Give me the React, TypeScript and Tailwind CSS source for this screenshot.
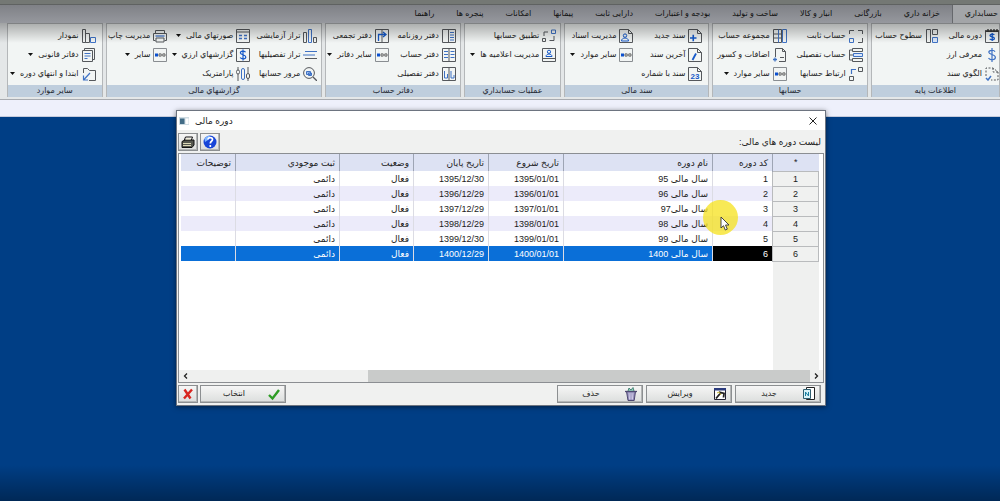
import React from "react";

type IconName =
  | "calendar" | "dollar" | "template" | "levels" | "fixed" | "detail" | "link" | "set" | "addsub"
  | "more" | "newdoc" | "lastdoc" | "numdoc" | "userdoc" | "match" | "notice" | "journal" | "ledger"
  | "subledger" | "summary" | "bars" | "lines" | "review" | "statement" | "dollarbox" | "param"
  | "printer" | "chart" | "book" | "folder";

const G = "#55585c";
const B = "#3f72c4";

const page = (
  <path d="M.5 .5h9l4 4v9H.5zM9.500 .5v4h4" stroke={G} fill="none" />
);

const icons: Record<IconName, React.ReactNode> = {
  calendar: (
    <>
      <path d="M.5 2.5h13v11H.5z" stroke={G} fill="none" />
      <path d="M0 2h14M3 0v3M6 0v3M9 0v3M12 0v3" stroke="#333" strokeWidth="1.3" />
      <path d="M9.3 5.8C8.500 4.800 5 4.900 5 6.600s4.400 1 4.400 2.800-3.600 1.800-4.700.5M7.200 4v8" stroke="#1559c9" fill="none" strokeWidth="1.300" />
    </>
  ),
  dollar: (
    <path d="M10 3.800C9 1.600 3.800 1.800 3.800 4.300S10.400 6.300 10.400 9.300 5 12.600 3.500 10M7 0v14" stroke={B} fill="none" strokeWidth="1.200" />
  ),
  template: (
    <>
      <path d="M1 9V1h7l5 4v8H6M8 1v4h5" stroke={G} fill="none" strokeDasharray="2 1.500" />
      <path d="M1 11l2 2 3-4" stroke={B} fill="none" strokeWidth="1.500" />
    </>
  ),
  levels: (
    <>
      <path d="M1.500 .5h4v13h-4zM7.500 .5h5v5h-5z" stroke={G} fill="none" />
      <path d="M7.500 8.500h5v5h-5z" stroke={B} fill="#dbe8fb" />
    </>
  ),
  fixed: (
    <>
      <path d="M.5 5V1.500H5M9 1.500h4.500V5M13.500 9v4.500H9" stroke={G} fill="none" />
      <path d="M.5 9.500h4v4h-4z" stroke={B} fill="none" />
    </>
  ),
  detail: (
    <>
      <path d="M3.500 .5h10v3h-10zM3.500 10.500h10v3h-10zM3 2H.5v10H3M.5 7h4" stroke={G} fill="none" />
      <path d="M4.500 5.500h9v3h-9z" stroke={B} fill="#dbe8fb" />
    </>
  ),
  link: (
    <>
      <path d="M9.500 .5h4v4h-4zM.5 9.500h4v4h-4z" stroke={G} fill="none" />
      <path d="M2.500 7V2.500H7" stroke={B} fill="none" strokeWidth="1.200" />
    </>
  ),
  set: (
    <>
      <path d="M.5 .5h8v13h-8zM.5 5h8M.5 9h8" stroke={G} fill="none" />
      <path d="M9.500 .5h4v13h-4z" stroke={B} fill="none" />
      <path d="M5.500 .5v13" stroke={B} />
    </>
  ),
  addsub: (
    <>
      <path d="M2.500 9V.5h7l3 3v10H6M9.500 .5v3h3M7 9.500h4" stroke={G} fill="none" />
      <path d="M0 11.500h4M2 9.500v4" stroke={B} strokeWidth="1.300" />
    </>
  ),
  more: (
    <>
      <path d="M.5 .5h13v13H.5z" stroke="#898d91" fill="none" />
      <path d="M2 5.500h3v3H2z" fill="#0b50cf" />
      <path d="M6 5.900h2.200v2.200H6zM9.800 5.900H12v2.200H9.800z" stroke="#444" fill="none" strokeWidth=".8" />
    </>
  ),
  newdoc: <>{page}<path d="M2 9h6.500M5.250 5.750v6.500" stroke="#1559c9" strokeWidth="1.600" /></>,
  lastdoc: <>{page}<path d="M4.500 12l3.500-6.500" stroke="#1559c9" strokeWidth="1.800" /></>,
  numdoc: (
    <>
      {page}
      <text x="7" y="12" textAnchor="middle" fontSize="8" fontWeight="700" fill="#1559c9" direction="ltr">23</text>
    </>
  ),
  userdoc: (
    <>
      {page}
      <circle cx="6" cy="6.600" r="1.700" stroke="#1559c9" fill="none" />
      <path d="M2.500 12c0-4 7-4 7 0z" stroke="#1559c9" fill="none" />
    </>
  ),
  match: (
    <>
      <path d="M.5 9.500h3v3h-3zM2 7V3h4M7.500 11.500H12V7" stroke={G} fill="none" />
      <path d="M9.500 1h4v3.500h-4z" stroke={B} fill="none" />
    </>
  ),
  notice: (
    <>
      <path d="M.5 .5h13v13H.5zM.5 10.500h13" stroke={G} fill="none" />
      <circle cx="7" cy="3.800" r="1.600" stroke="#1559c9" fill="none" />
      <path d="M4 8.500c0-3.300 6-3.300 6 0z" stroke="#1559c9" fill="none" />
    </>
  ),
  journal: (
    <>
      <path d="M.5 .5h13v13H.5zM6.500 .5v13" stroke={G} fill="none" />
      <path d="M8 3.500h4M8 6h4M8 8.500h4M8 11h4" stroke={B} />
    </>
  ),
  ledger: (
    <>
      <path d="M.5 .5h13v13H.5zM7 .5v13" stroke={G} fill="none" />
      <path d="M2 3.500h4M2 6.500h4M2 9.500h4M8.500 3.500h4M8.500 6.500h4M8.500 9.500h4" stroke={B} />
    </>
  ),
  subledger: (
    <>
      <path d="M.5 .5h13v13H.5zM7 .5v13" stroke={G} fill="none" />
      <path d="M2.500 4v7h3V7M9 4v7h3V8" stroke={B} fill="none" />
    </>
  ),
  summary: (
    <>
      <path d="M.5 .5h13v13H.5zM7 .5v13" stroke={G} fill="none" />
      <path d="M3.500 12V5.500h7M8 3l3 2.500L8 8" stroke="#1559c9" fill="none" strokeWidth="1.300" />
    </>
  ),
  bars: (
    <>
      <path d="M.5 3.500h3v10h-3zM10.500 8.500h3v5h-3z" stroke={G} fill="none" />
      <path d="M5.500 .5h3v13h-3z" stroke={B} fill="none" />
    </>
  ),
  lines: (
    <>
      <path d="M2 3.500h12M0 7h12" stroke={B} />
      <path d="M2 10.500h12" stroke={G} />
    </>
  ),
  review: (
    <>
      <circle cx="6" cy="6" r="5.400" stroke={G} fill="none" />
      <path d="M10 10l4 4" stroke={G} strokeWidth="1.300" />
      <path d="M3.500 4.500h4v3h-4zM5.500 6h3v2.500h-3z" stroke={B} fill="#9dbcec" />
    </>
  ),
  statement: (
    <>
      <path d="M.5 .5h13v13H.5zM.5 3h13" stroke={G} fill="none" />
      <path d="M3 6.500h3M8 6.500h3M3 9.500h3M8 9.500h3" stroke={B} strokeWidth="1.300" />
    </>
  ),
  dollarbox: (
    <>
      <path d="M.5 .5h13v13H.5z" stroke={G} fill="none" />
      <path d="M9.500 4.300C8.800 2.600 4.400 2.800 4.400 4.900s5.400 1.600 5.400 4.100-4.400 2.500-5.600.5M7 1.500v11" stroke="#1559c9" fill="none" strokeWidth="1.200" />
    </>
  ),
  param: (
    <>
      <path d="M2 0v3M2 7v7M12 0v6M12 11v3" stroke={G} />
      <rect x=".5" y="3" width="3" height="4" rx="1.500" stroke={G} fill="none" />
      <rect x="10.500" y="6.500" width="3" height="5" rx="1.500" stroke={G} fill="none" />
      <rect x="5.500" y="1.500" width="3" height="11" rx="1.500" stroke={B} fill="none" />
    </>
  ),
  printer: (
    <>
      <path d="M2.500 4.500v-3h9v3M2.500 11.500h-2v-7h13v7h-2" stroke={G} fill="none" />
      <path d="M3 9h8v4H3z" stroke={G} fill="none" />
      <path d="M2.500 7h9" stroke={B} strokeWidth="1.300" />
    </>
  ),
  chart: (
    <>
      <path d="M.5 .5h3v13h-3zM3.500 4.500h4v9h-4z" stroke={G} fill="none" />
      <path d="M8.500 8.500h5v5h-5z" stroke={B} fill="none" />
    </>
  ),
  book: (
    <>
      <path d="M2.500 2.500V.5h10v11h-2M.5 2.500h10v11H.5z" stroke={G} fill="none" />
      <path d="M2.500 5.500h6M2.500 8h6M2.500 10.500h3" stroke={B} />
    </>
  ),
  folder: (
    <>
      <path d="M1.500 6V1.500h4l2 2h6v10H7" stroke={G} fill="none" />
      <path d="M8 6l-6 6.500M1.500 8.500v4.500H6" stroke={B} fill="none" strokeWidth="1.200" />
    </>
  ),
};

type Item = { icon: IconName; label: string; menu?: boolean };
type Group = { title: string; cols: string; pad: string; columns: Item[][] };

const groups: Group[] = [
  {
    title: "اطلاعات پایه",
    cols: "grid-cols-[60px_1fr]",
    pad: "ps-0",
    columns: [
      [
        { icon: "calendar", label: "دوره مالی" },
        { icon: "dollar", label: "معرفی ارز" },
        { icon: "template", label: "الگوي سند" },
      ],
      [{ icon: "levels", label: "سطوح حساب" }],
    ],
  },
  {
    title: "حسابها",
    cols: "grid-cols-[76px_1fr]",
    pad: "ps-1",
    columns: [
      [
        { icon: "fixed", label: "حساب ثابت" },
        { icon: "detail", label: "حساب تفصیلی" },
        { icon: "link", label: "ارتباط حسابها" },
      ],
      [
        { icon: "set", label: "مجموعه حساب" },
        { icon: "addsub", label: "اضافات و کسور" },
        { icon: "more", label: "سایر موارد", menu: true },
      ],
    ],
  },
  {
    title: "سند مالی",
    cols: "grid-cols-[69px_1fr]",
    pad: "ps-1.5",
    columns: [
      [
        { icon: "newdoc", label: "سند جدید" },
        { icon: "lastdoc", label: "آخرین سند" },
        { icon: "numdoc", label: "سند با شماره" },
      ],
      [
        { icon: "userdoc", label: "مدیریت اسناد" },
        { icon: "more", label: "سایر موارد", menu: true },
      ],
    ],
  },
  {
    title: "عملیات حسابداري",
    cols: "grid-cols-[1fr]",
    pad: "ps-1",
    columns: [
      [
        { icon: "match", label: "تطبیق حسابها" },
        { icon: "notice", label: "مدیریت اعلامیه ها", menu: true },
      ],
    ],
  },
  {
    title: "دفاتر حساب",
    cols: "grid-cols-[67px_1fr]",
    pad: "ps-1",
    columns: [
      [
        { icon: "journal", label: "دفتر روزنامه" },
        { icon: "ledger", label: "دفتر حساب" },
        { icon: "subledger", label: "دفتر تفصیلی" },
      ],
      [
        { icon: "summary", label: "دفتر تجمعی" },
        { icon: "more", label: "سایر دفاتر", menu: true },
      ],
    ],
  },
  {
    title: "گزارشهاي مالی",
    cols: "grid-cols-[67px_83px_1fr]",
    pad: "ps-1",
    columns: [
      [
        { icon: "bars", label: "تراز آزمایشی" },
        { icon: "lines", label: "تراز تفصیلیها" },
        { icon: "review", label: "مرور حسابها" },
      ],
      [
        { icon: "statement", label: "صورتهاي مالی", menu: true },
        { icon: "dollarbox", label: "گزارشهاي ارزي", menu: true },
        { icon: "param", label: "پارامتریک" },
      ],
      [
        { icon: "printer", label: "مدیریت چاپ" },
        { icon: "more", label: "سایر", menu: true },
      ],
    ],
  },
  {
    title: "سایر موارد",
    cols: "grid-cols-[1fr]",
    pad: "ps-1.5",
    columns: [
      [
        { icon: "chart", label: "نمودار" },
        { icon: "book", label: "دفاتر قانونی", menu: true },
        { icon: "folder", label: "ابتدا و انتهاي دوره", menu: true },
      ],
    ],
  },
];

const tabs = [
  "خزانه داري", "بازرگانی", "انبار و کالا", "ساخت و تولید", "بودجه و اعتبارات",
  "دارایی ثابت", "پیمانها", "امکانات", "پنجره ها", "راهنما",
];

const rows = [
  { code: 1, name: "سال مالی 95", start: "1395/01/01", end: "1395/12/30" },
  { code: 2, name: "سال مالی 96", start: "1396/01/01", end: "1396/12/29" },
  { code: 3, name: "سال مالی97", start: "1397/01/01", end: "1397/12/29" },
  { code: 4, name: "سال مالی 98", start: "1398/01/01", end: "1398/12/29" },
  { code: 5, name: "سال مالی 99", start: "1399/01/01", end: "1399/12/30" },
  { code: 6, name: "سال مالی 1400", start: "1400/01/01", end: "1400/12/29" },
];

function RibbonItem({ icon, label, menu }: Item) {
  return (
    <button type="button" className="flex h-[19px] items-center gap-[3px] whitespace-nowrap text-[#1c1c1c]">
      <svg viewBox="0 0 14 14" className="size-3.5 shrink-0" aria-hidden="true">{icons[icon]}</svg>
      <span>{label}</span>
      {menu && (
        <svg viewBox="0 0 5 3" className="ms-0.5 h-[3px] w-[5px]" aria-hidden="true">
          <path d="M0 0h5L2.500 3z" fill="#111" />
        </svg>
      )}
    </button>
  );
}

function RibbonGroup({ title, cols, pad, columns }: Group) {
  return (
    <section className="flex flex-col overflow-hidden border-x border-t border-[#b4b7b9] bg-[#f2f5f4]">
      <div className={`grid h-[61px] ${cols} ${pad}`}>
        {columns.map((items, i) => (
          <div key={i} className="flex flex-col items-start pt-0.5">
            {items.map((item) => <RibbonItem key={item.label} {...item} />)}
          </div>
        ))}
      </div>
      <h2 className="h-3 bg-[#bfcedd] text-center leading-3 text-[#1f2832]">{title}</h2>
    </section>
  );
}

function PushButton({ label, wide, children }: { label: string; wide?: boolean; children: React.ReactNode }) {
  return (
    <button
      type="button"
      aria-label={label}
      className={`flex h-[18px] items-center border border-[#8c8f91] bg-linear-to-b from-[#f6f6f6] to-[#dcdedd] text-[8px] shadow-[inset_-1px_-1px_0_#b4b6b6] ${wide ? "w-[86px] ps-1" : "w-5 justify-center"}`}
    >
      {children}
      {wide && <span className="flex-1 text-center">{label}</span>}
    </button>
  );
}

const th = "border-e border-[#9ea5b4] px-1 text-start font-normal";
const td = "border-e border-[#dcdce4] px-1";

export default function App() {
  return (
    <div className="relative flex min-h-screen flex-col overflow-hidden bg-[#003e85] font-['Liberation_Sans','DejaVu_Sans',sans-serif] text-[9px] leading-3 text-[#1c1c1c]" dir="rtl">
      <header className="text-[8px]">
        <div className="h-[5px] border-b border-[#5f6261] bg-[#747874]" />
        <nav className="flex h-[18px] items-stretch bg-linear-to-b from-[#7f8186] to-[#96989e] text-[#111]">
          <a href="#accounting" className="flex w-12 items-center border-e border-[#66686c] bg-[#a3a5a8] ps-0.5">حسابداري</a>
          <div className="flex items-center gap-[22px] ps-3">
            {tabs.map((t) => <a key={t} href="#tab" className="whitespace-nowrap">{t}</a>)}
          </div>
        </nav>
        <div className="grid grid-cols-[130fr_156fr_146fr_98fr_136fr_218fr_96fr] gap-[3px] border-b border-[#a8abb0] bg-[#e4e7e8] pb-0.5 pe-[7px]">
          {groups.map((g) => <RibbonGroup key={g.title} {...g} />)}
        </div>
        <div className="h-[17px] border-b border-[#c5cbdc] bg-[#eef0fb]" />
      </header>

      <div className="pointer-events-none absolute inset-x-0 top-[23px] h-5 bg-linear-to-b from-black/30 to-transparent" />
      <div className="pointer-events-none absolute inset-x-0 bottom-0 h-9 bg-linear-to-b from-transparent to-black/35" />

      <div role="dialog" aria-label="دوره مالی" className="absolute top-[110px] left-[176px] flex h-[296px] w-[650px] flex-col border border-[#6d7480] bg-[#f0f1f0] shadow-[0_1px_5px_rgba(0,0,0,0.5)]">
        <div className="flex h-[19px] items-center justify-between bg-white ps-2 pe-0.5">
          <button type="button" aria-label="بستن" className="flex items-center">
            <svg viewBox="0 0 8 8" className="size-2"><path d="M.5 .5l7 7M7.500 .5l-7 7" stroke="#222" /></svg>
          </button>
          <div className="flex items-center gap-1.5">
            <span>دوره مالی</span>
            <svg viewBox="0 0 10 8" className="h-2 w-2.5" aria-hidden="true">
              <path d="M0 0h10v8H0z" fill="#cfdce3" />
              <path d="M1 1.500h4.500V7H1z" fill="#426c86" />
              <path d="M6.500 1.500h3V7h-3z" fill="#fff" />
            </svg>
          </div>
        </div>
        <div className="flex h-[23px] items-center justify-between ps-1 pe-px">
          <span>لیست دوره هاي مالی:</span>
          <div className="flex gap-0.5">
            <PushButton label="راهنما">
              <svg viewBox="0 0 14 14" className="size-3.5 shrink-0">
                <circle cx="7" cy="7" r="6.500" fill="#1745d8" />
                <path d="M1.500 4C3 1 6 .5 7 1L5 5l-3 2z" fill="#7fb5ff" />
                <path d="M5 4.500C5 2 9.500 2 9.500 4.500 9.500 6.500 7.300 6 7.300 8.500M7.300 10v2" stroke="#fff" strokeWidth="1.700" fill="none" />
              </svg>
            </PushButton>
            <PushButton label="چاپ">
              <svg viewBox="0 0 14 14" className="size-3.5 shrink-0">
                <path d="M4.500 2h7l-1.500 4h-7z" fill="#fff" stroke="#111" />
                <path d="M1 6.500L4 5h9v5l-2 2.500H1z" fill="#55574f" stroke="#111" />
                <path d="M2 8.500h8M2 10.500h8M5 4h4.500" stroke="#dcd9b8" />
              </svg>
            </PushButton>
          </div>
        </div>

        <div className="mx-px flex flex-1 flex-col border border-[#8b8e92] bg-white">
          <div className="flex flex-1 flex-col ps-1 pe-0.5">
            <table className="w-full table-fixed border-collapse">
              <colgroup>
                <col className="w-[46px]" /><col className="w-[60px]" /><col className="w-[149px]" /><col className="w-[75px]" />
                <col className="w-[75px]" /><col className="w-[74px]" /><col className="w-[104px]" /><col />
              </colgroup>
              <thead>
                <tr className="h-[17px] bg-[#dde2f3]">
                  <th className="border-e border-[#9ea5b4] text-center font-normal">*</th>
                  <th className={th}>کد دوره</th>
                  <th className={th}>نام دوره</th>
                  <th className={th}>تاریخ شروع</th>
                  <th className={th}>تاریخ پایان</th>
                  <th className={th}>وضعیت</th>
                  <th className={th}>ثبت موجودي</th>
                  <th className="px-1 text-start font-normal">توضیحات</th>
                </tr>
              </thead>
              <tbody>
                {rows.map((r) => {
                  const sel = r.code === 6;
                  return (
                    <tr key={r.code} className={`h-[15px] ${sel ? "bg-[#0a6fd8] text-white" : "odd:bg-white even:bg-[#ecebfa]"}`}>
                      <th scope="row" className="border border-[#b9bbbd] bg-[#f0f1f0] text-center font-normal text-[#1c1c1c]">{r.code}</th>
                      <td className={`${td} ${sel ? "bg-black" : ""}`}>{r.code}</td>
                      <td className={td}>{r.name}</td>
                      <td className={td}>{r.start}</td>
                      <td className={td}>{r.end}</td>
                      <td className={td}>فعال</td>
                      <td className={td}>دائمی</td>
                      <td />
                    </tr>
                  );
                })}
              </tbody>
            </table>
            <div className="w-[46px] flex-1 bg-[#eff0ef]" />
          </div>
          <div className="flex h-3 items-center bg-[#eff0ef] px-1" dir="ltr">
            <svg viewBox="0 0 5 6" className="h-1.5 w-[5px]"><path d="M4 .5L1.500 3 4 5.500" stroke="#222" strokeWidth="1.300" fill="none" /></svg>
            <div className="flex flex-1 self-stretch ps-2 pe-1"><div className="ms-auto w-[72%] bg-[#c9cbca]" /></div>
            <svg viewBox="0 0 5 6" className="h-1.5 w-[5px]"><path d="M1 .5L3.500 3 1 5.500" stroke="#222" strokeWidth="1.300" fill="none" /></svg>
          </div>
        </div>

        <div className="flex h-[22px] items-center gap-[3px] ps-1 pe-px">
          <PushButton label="جدید" wide>
            <svg viewBox="0 0 14 14" className="size-3.5 shrink-0">
              <path d="M4.500 .5h8v12h-8z" fill="#fff" stroke="#222" />
              <path d="M1.500 2.500h7v9h-7z" fill="#d9f3f8" stroke="#2f5f70" />
              <path d="M3.500 9V5l3 4V5" stroke="#187fa0" fill="none" />
            </svg>
          </PushButton>
          <PushButton label="ویرایش" wide>
            <svg viewBox="0 0 14 14" className="size-3.5 shrink-0">
              <path d="M1.500 1.500h11v11h-11z" fill="#fff" stroke="#223" />
              <path d="M1 1h12v2.500H1z" fill="#2a3a7c" />
              <path d="M3 11.500l5-6M6 5l5 1.500-.5 4" stroke="#222" fill="none" strokeWidth="1.800" />
              <path d="M4 6l2-1 2 3" stroke="#c9b73a" fill="none" />
            </svg>
          </PushButton>
          <PushButton label="حذف" wide>
            <svg viewBox="0 0 14 14" className="size-3.5 shrink-0">
              <path d="M2.500 4.500h9l-1.300 9H4z" fill="#8d86b5" stroke="#4f4a72" />
              <path d="M5 5.500l.5 7M7 5.500v7M9 5.500l-.5 7" stroke="#d6d2ec" />
              <path d="M4 4l1-3 2 2 2-2.500L10 4" fill="#8fd0b8" stroke="#4b8478" />
              <path d="M1 4.500h12" stroke="#4f4a72" strokeWidth="1.300" />
            </svg>
          </PushButton>
          <div className="ms-auto flex gap-0.5">
            <PushButton label="انتخاب" wide>
              <svg viewBox="0 0 14 14" className="size-3.5 shrink-0">
                <path d="M2 8l3.500 3.500L12 3" stroke="#2d9c24" strokeWidth="2.400" fill="none" />
              </svg>
            </PushButton>
            <PushButton label="انصراف">
              <svg viewBox="0 0 12 12" className="size-3 shrink-0">
                <path d="M2.500 1.500l6 9M10 1.500L2 10.500" stroke="#d8251f" strokeWidth="2.400" />
              </svg>
            </PushButton>
          </div>
        </div>
      </div>

      <div className="pointer-events-none absolute top-[200px] left-[703px] size-[35px] rounded-full bg-[#f5e11c]/75" />
      <svg viewBox="0 0 10 15" className="pointer-events-none absolute top-[216px] left-[720px] h-[15px] w-2.5" aria-hidden="true">
        <path d="M1 1v11l2.500-2.300L5.300 14l2-.9L5.500 9H9z" fill="#fff" stroke="#333" strokeWidth=".9" />
      </svg>
    </div>
  );
}
